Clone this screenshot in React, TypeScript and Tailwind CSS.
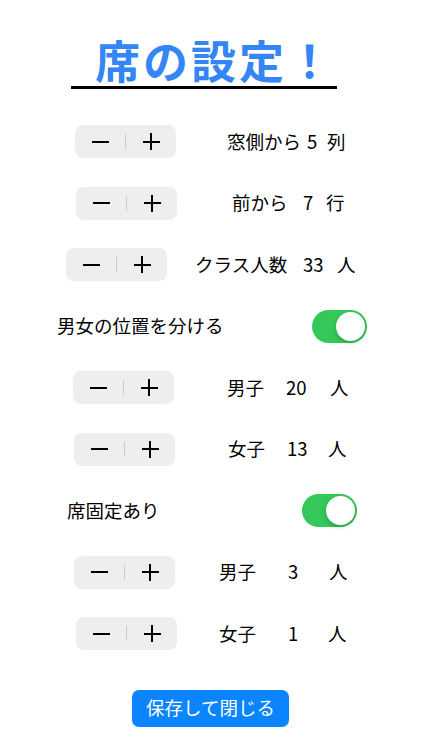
import React from 'react';

function Stepper({ className = '' }: { className?: string }) {
  return (
    <div className={`flex h-[33px] w-[101px] shrink-0 items-center rounded-[8px] bg-[#eeeef0] ${className}`}>
      <div className="flex flex-1 items-center justify-center">
        <div className="h-[2px] w-[17px] bg-black" />
      </div>
      <div className="h-[15px] w-px bg-[#c9c9ce]" />
      <div className="relative flex flex-1 items-center justify-center">
        <div className="h-[2px] w-[17px] bg-black" />
        <div className="absolute h-[17px] w-[2px] bg-black" />
      </div>
    </div>
  );
}

function Toggle({ className = '' }: { className?: string }) {
  return (
    <div className={`flex h-[33px] w-[55px] shrink-0 items-center justify-end rounded-full bg-[#34c759] p-[2px] ${className}`}>
      <div className="h-[29px] w-[29px] rounded-full bg-white shadow-[0_2px_4px_rgba(0,0,0,0.2)]" />
    </div>
  );
}

function Row({ children }: { children: React.ReactNode }) {
  return <div className="flex h-[61.5px] items-center whitespace-nowrap">{children}</div>;
}

export default function App() {
  return (
    <div className="h-[750px] w-[422px] bg-white font-['Noto_Sans_CJK_JP',sans-serif] text-[18.5px] text-black">
      <div className="pt-[37px]">
        <div className="ml-[71px] w-[266px] border-b-[3px] border-black pb-[3px]">
          <h1 className="pl-[24px] text-[45px] font-bold leading-[46px] tracking-[3px] text-[#3485f5]">席の設定！</h1>
        </div>
      </div>

      <div className="mt-[22px]">
        <Row>
          <Stepper className="ml-[75px]" />
          <span className="ml-[51px] w-[80px]">窓側から</span>
          <span className="w-[20px]">5</span>
          <span>列</span>
        </Row>
        <Row>
          <Stepper className="ml-[76px]" />
          <span className="ml-[55px] w-[71px]">前から</span>
          <span className="w-[23px]">7</span>
          <span>行</span>
        </Row>
        <Row>
          <Stepper className="ml-[66px]" />
          <span className="ml-[28px] w-[108px]">クラス人数</span>
          <span className="w-[34px]">33</span>
          <span>人</span>
        </Row>
        <Row>
          <span className="ml-[57px] w-[255px]">男女の位置を分ける</span>
          <Toggle />
        </Row>
        <Row>
          <Stepper className="ml-[73px]" />
          <span className="ml-[53px] w-[59px]">男子</span>
          <span className="w-[44px]">20</span>
          <span>人</span>
        </Row>
        <Row>
          <Stepper className="ml-[74px]" />
          <span className="ml-[53px] w-[59px]">女子</span>
          <span className="w-[41px]">13</span>
          <span>人</span>
        </Row>
        <Row>
          <span className="ml-[67px] w-[235px]">席固定あり</span>
          <Toggle />
        </Row>
        <Row>
          <Stepper className="ml-[74px]" />
          <span className="ml-[44px] w-[69px]">男子</span>
          <span className="w-[41px]">3</span>
          <span>人</span>
        </Row>
        <Row>
          <Stepper className="ml-[76px]" />
          <span className="ml-[42px] w-[69px]">女子</span>
          <span className="w-[40px]">1</span>
          <span>人</span>
        </Row>
      </div>

      <div className="mt-[25px] flex justify-center">
        <button className="ml-[-1px] h-[37px] w-[157px] rounded-[7px] bg-[#0a84ff] text-[18.5px] text-white">
          保存して閉じる
        </button>
      </div>
    </div>
  );
}
